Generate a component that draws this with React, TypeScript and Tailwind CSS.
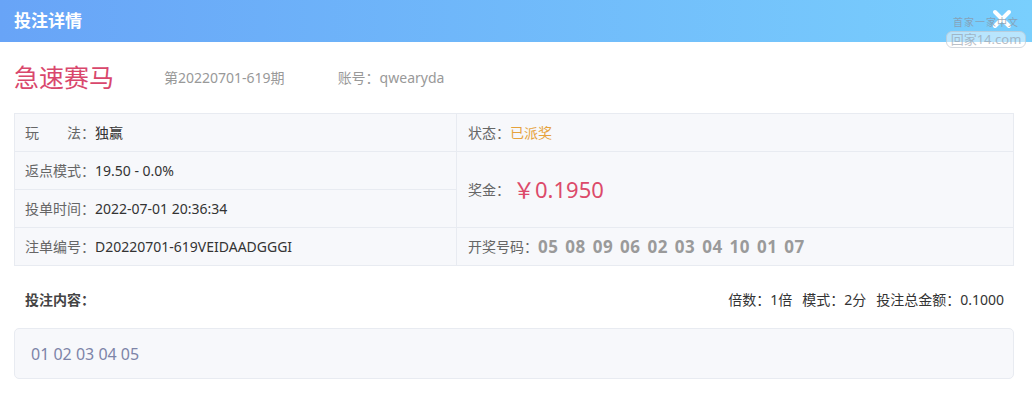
const font = { fontFamily: '"Noto Sans", "Noto Sans CJK SC", sans-serif' };

const Label = ({ children }: { children: string }) => (
  <span className="text-[#666]">{children}：</span>
);

export default function App() {
  return (
    <div className="relative w-[1032px] h-[420px] bg-white overflow-hidden" style={font}>
      {/* HEADER */}
      <div className="h-[42px] flex items-center justify-between px-[14px] bg-gradient-to-r from-[#68a4f7] to-[#79cffd]">
        <h1 className="text-white font-bold text-[17px]">投注详情</h1>
        <svg width="20" height="20" viewBox="0 0 20 20" className="mr-[6px] -mt-[4px]">
          <path d="M3 3 L17 17 M17 3 L3 17" stroke="white" strokeWidth="4" strokeLinecap="round" />
        </svg>
      </div>

      {/* watermark */}
      <div className="absolute left-[946px] top-[17px] w-[80px] flex flex-col items-center opacity-80 pointer-events-none">
        <span className="text-[10px] text-[#8a98a8] leading-none tracking-[1px]">首家一家中文</span>
        <span className="mt-[4px] w-[80px] text-center border border-[#c9cfd6] rounded-[6px] text-[13px] leading-[15px] text-[#a9b1ba] bg-white/60">回家14.com</span>
      </div>

      {/* TITLE LINE */}
      <div className="h-[71px] flex items-center px-[14px]">
        <span className="text-[25px] text-[#d9476c] leading-none">急速赛马</span>
        <span className="ml-[50px] text-[14px] text-[#999]">第20220701-619期</span>
        <span className="ml-[53px] text-[14px] text-[#999]">账号：qwearyda</span>
      </div>

      {/* INFO TABLE */}
      <div className="ml-[14px] w-[1000px] grid grid-cols-[441px_556px] grid-rows-[37px_37px_37px_37px] gap-px p-px bg-[#e8ebf1] text-[14px] text-[#333]">
        <div className="bg-[#f7f8fb] flex items-center px-[10px]">
          <span className="w-[56px] flex justify-between text-[#666]"><span>玩</span><span>法</span></span>
          <span className="text-[#666]">：</span>独赢
        </div>
        <div className="bg-[#f7f8fb] flex items-center px-[11px]">
          <Label>状态</Label><span className="text-[#e6a23c]">已派奖</span>
        </div>
        <div className="bg-[#f7f8fb] flex items-center px-[10px]">
          <Label>返点模式</Label>19.50 - 0.0%
        </div>
        <div className="bg-[#f7f8fb] row-span-2 flex items-center px-[11px]">
          <Label>奖金</Label>
          <span className="ml-[3px] text-[22px] text-[#dc4a6a]">￥0.1950</span>
        </div>
        <div className="bg-[#f7f8fb] flex items-center px-[10px]">
          <Label>投单时间</Label>2022-07-01 20:36:34
        </div>
        <div className="bg-[#f7f8fb] flex items-center px-[10px]">
          <Label>注单编号</Label>D20220701-619VEIDAADGGGI
        </div>
        <div className="bg-[#f7f8fb] flex items-center px-[11px]">
          <Label>开奖号码</Label>
          <span className="text-[17px] font-bold text-[#9a9a9a] tracking-[0.5px] [word-spacing:2px]">05 08 09 06 02 03 04 10 01 07</span>
        </div>
      </div>

      {/* BET CONTENT */}
      <div className="mt-[18px] h-[30px] flex items-center justify-between pl-[25px] pr-[28px] text-[14px]">
        <span className="font-bold text-[#444]">投注内容：</span>
        <span className="text-[#333] flex gap-[10px]">
          <span>倍数：1倍</span>
          <span>模式：2分</span>
          <span>投注总金额：0.1000</span>
        </span>
      </div>
      <div className="mt-[14px] ml-[14px] w-[1000px] h-[51px] flex items-center px-[16px] bg-[#f7f8fb] border border-[#e8ebf1] rounded-[5px] text-[16px] text-[#7d84a8]">
        01 02 03 04 05
      </div>
    </div>
  );
}
